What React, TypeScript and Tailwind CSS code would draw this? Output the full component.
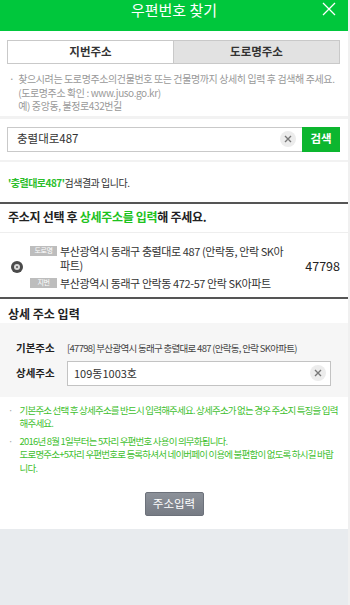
import React, { useState } from 'react';

const FONT = { fontFamily: '"Noto Sans CJK KR", "Noto Sans", sans-serif' };

const ClearButton = ({ size = 16 }: { size?: number }) => (
  <span
    className="flex items-center justify-center rounded-full bg-[#ececec] text-[#777]"
    style={{ width: size, height: size }}
  >
    <svg width="8" height="8" viewBox="0 0 8 8" fill="none" stroke="currentColor" strokeWidth="1.4">
      <path d="M1 1L7 7M7 1L1 7" />
    </svg>
  </span>
);

const Tag = ({ label }: { label: string }) => (
  <span className="mr-[3px] mt-[2px] inline-flex h-[10px] w-[27px] shrink-0 items-center justify-center bg-[#bdbdbd] text-[7px] leading-none text-white">
    {label}
  </span>
);

export default function App() {
  const [tab, setTab] = useState<'jibun' | 'road'>('road');
  const [query, setQuery] = useState('충렬대로487');
  const [detail, setDetail] = useState('109동1003호');

  return (
    <div className="flex h-[605px] w-[350px] overflow-hidden bg-[#e8ebee]" style={FONT}>
      <div className="flex w-[348px] flex-col">
        <div className="bg-white">
          {/* Header */}
          <div className="relative flex h-[31px] items-start justify-center bg-[#00c73c]">
            <span className="pt-[1px] text-[15px] leading-[18px] text-white">우편번호 찾기</span>
            <button className="absolute right-[12px] top-[2px] text-white">
              <svg width="14" height="14" viewBox="0 0 14 14" fill="none" stroke="currentColor" strokeWidth="1.3">
                <path d="M1 1L13 13M13 1L1 13" />
              </svg>
            </button>
          </div>

          {/* Tabs */}
          <div className="px-[7px] pt-[9px]">
            <div className="flex h-[24px] w-[333px] border border-[#c9c9c9]">
              <button
                onClick={() => setTab('jibun')}
                className={`flex-1 text-[11.5px] font-bold text-[#333] ${tab === 'jibun' ? 'bg-[#e2e2e2]' : 'bg-white'}`}
              >
                지번주소
              </button>
              <button
                onClick={() => setTab('road')}
                className={`flex-1 border-l border-[#c9c9c9] text-[11.5px] font-bold text-[#333] ${tab === 'road' ? 'bg-[#e2e2e2]' : 'bg-white'}`}
              >
                도로명주소
              </button>
            </div>
          </div>

          {/* Help text */}
          <div className="flex gap-[4px] px-[9px] pb-[3px] pt-[8px] text-[10px] leading-[13.5px] tracking-[-0.4px] text-[#999]">
            <span>·</span>
            <div>
              <p>찾으시려는 도로명주소의건물번호 또는 건물명까지 상세히 입력 후 검색해 주세요.</p>
              <p>(도로명주소 확인 : www.juso.go.kr)</p>
              <p>예) 중앙동, 불정로432번길</p>
            </div>
          </div>
          <div className="h-[3px] bg-[#f2f2f2]" />

          {/* Search */}
          <div className="px-[7px] py-[8px]">
            <div className="flex h-[25px] w-[333px]">
              <div className="flex flex-1 items-center border border-r-0 border-[#c9c9c9] pl-[9px] pr-[6px]">
                <input
                  value={query}
                  onChange={(e) => setQuery(e.target.value)}
                  className="min-w-0 flex-1 bg-transparent text-[11.5px] text-[#333] outline-none"
                />
                <ClearButton />
              </div>
              <button className="w-[38px] bg-[#0cb62f] text-[11.5px] font-bold text-white">검색</button>
            </div>
          </div>
          <div className="h-[2px] bg-[#f2f2f2]" />

          {/* Result message */}
          <p className="px-[8px] pb-[13px] pt-[14px] text-[10px] leading-[13px] tracking-[-0.5px] text-[#333]">
            <span className="font-bold text-[#2bbe2b]">'충렬대로487'</span>검색결과 입니다.
          </p>
          <div className="h-[2px] bg-[#555]" />

          <p className="px-[8px] pb-[6px] pt-[4px] text-[12px] font-bold leading-[18px] tracking-[-0.3px] text-[#222]">
            주소지 선택 후 <span className="text-[#1ec21e]">상세주소를 입력</span>해 주세요.
          </p>
          <div className="h-[1px] bg-[#eeeeee]" />

          {/* Result row */}
          <div className="flex items-center pb-[7px] pl-[11px] pr-[8px] pt-[11px]">
            <span className="mr-[7px] flex h-[12px] w-[12px] items-center justify-center rounded-full bg-[#4a4a4a]">
              <span className="flex h-[6px] w-[6px] items-center justify-center rounded-full bg-[#d8d8d8]">
                <span className="h-[2px] w-[2px] rounded-full bg-[#555]" />
              </span>
            </span>
            <div className="flex-1 text-[11px] leading-[14px] tracking-[-0.4px] text-[#333]">
              <div className="flex items-start">
                <Tag label="도로명" />
                <span>부산광역시 동래구 충렬대로 487 (안락동, 안락 SK아<br />파트)</span>
              </div>
              <div className="mt-[4px] flex items-start">
                <Tag label="지번" />
                <span>부산광역시 동래구 안락동 472-57 안락 SK아파트</span>
              </div>
            </div>
            <span className="ml-[4px] text-[12.5px] text-[#222]">47798</span>
          </div>
          <div className="h-[2px] bg-[#555]" />

          <p className="px-[8px] pb-[1px] pt-[6px] text-[12px] font-bold leading-[17px] text-[#222]">상세 주소 입력</p>

          {/* Detail input */}
          <div className="bg-[#f6f6f6] px-[16px] pb-[11px] pt-[18px]">
            <div className="flex items-center leading-[14px]">
              <span className="w-[51px] text-[10.5px] font-bold text-[#222]">기본주소</span>
              <span className="text-[9.5px] tracking-[-0.7px] text-[#444]">[47798] 부산광역시 동래구 충렬대로 487 (안락동, 안락 SK아파트)</span>
            </div>
            <div className="mt-[6px] flex items-center">
              <span className="w-[51px] text-[10.5px] font-bold text-[#222]">상세주소</span>
              <div className="flex h-[25px] w-[264px] items-center border border-[#c3c3c3] bg-white pl-[6px] pr-[4px]">
                <input
                  value={detail}
                  onChange={(e) => setDetail(e.target.value)}
                  className="min-w-0 flex-1 bg-transparent text-[11px] text-[#333] outline-none"
                />
                <ClearButton />
              </div>
            </div>
          </div>

          {/* Notes */}
          <div className="px-[8px] pt-[7px] text-[9.5px] leading-[13.5px] tracking-[-0.8px] text-[#3fbf2f]">
            <div className="flex gap-[7px]">
              <span className="text-[#aaa]">·</span>
              <p>기본주소 선택 후 상세주소를 반드시 입력해주세요. 상세주소가 없는 경우 주소지 특징을 입력해주세요.</p>
            </div>
            <div className="mt-[4px] flex gap-[7px]">
              <span className="text-[#aaa]">·</span>
              <p>
                2016년 8월 1일부터는 5자리 우편번호 사용이 의무화됩니다.
                <br />
                도로명주소+5자리 우편번호로 등록하셔서 네이버페이 이용에 불편함이 없도록 하시길 바랍니다.
              </p>
            </div>
          </div>

          <div className="flex justify-center pb-[13px] pt-[17px]">
            <button className="h-[24px] w-[59px] rounded-[2px] border border-[#6c717a] bg-gradient-to-b from-[#8c9199] to-[#767b84] text-[11.5px] text-white">
              주소입력
            </button>
          </div>
        </div>
      </div>
      <div className="w-[2px] bg-[#f0f0f0]" />
    </div>
  );
}
